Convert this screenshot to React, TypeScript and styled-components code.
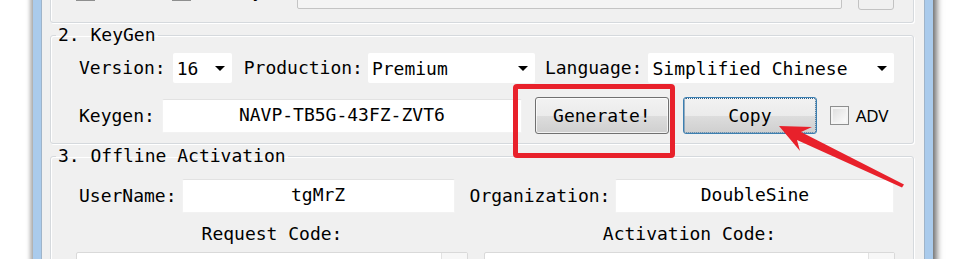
import styled, { createGlobalStyle } from 'styled-components';

const GlobalStyle = createGlobalStyle`
  html, body {
    margin: 0;
    padding: 0;
    background: #ffffff;
  }
  body {
    font-family: 'DejaVu Sans Mono', 'Liberation Mono', monospace;
    font-size: 18px;
    color: #000;
  }
`;

const App = () => {
  return (
    <Page>
      <GlobalStyle />
      <Frame>
        <Client>
          <Group>
            <Row $h={49} $pl={25} $pb={12} $align="flex-end">
              <CheckItem $w={96}>
                <CheckBox $mb={9} />
                <CheckText $mb={9}>Patch</CheckText>
              </CheckItem>
              <CheckItem $w={125}>
                <CheckBox $mb={9} />
                <CheckText $mb={9}>Verify</CheckText>
              </CheckItem>
              <TopField />
              <SmallButton />
            </Row>
          </Group>

          <Group $mt={2}>
            <Title>2. KeyGen</Title>
            <Row $pt={8} $pl={28}>
              <Label $mr={7}>Version:</Label>
              <Combo $w={59}>
                16
                <Arrow />
              </Combo>
              <Label $ml={12} $mr={5}>
                Production:
              </Label>
              <Combo $w={167}>
                Premium
                <Arrow />
              </Combo>
              <Label $ml={10} $mr={6}>
                Language:
              </Label>
              <Combo $w={246}>
                Simplified Chinese
                <Arrow />
              </Combo>
            </Row>
            <Row $pt={14} $pl={28} $pb={9}>
              <Label $mr={7}>Keygen:</Label>
              <TextBox $w={360}>NAVP-TB5G-43FZ-ZVT6</TextBox>
              <Marked>
                <Button>Generate!</Button>
                <RedBox />
              </Marked>
              <Button $focused>Copy</Button>
              <CheckBox $ml={13} />
              <AdvText>ADV</AdvText>
            </Row>
          </Group>

          <Group $mt={2}>
            <Title>3. Offline Activation</Title>
            <Row $pt={13} $pl={28}>
              <Label $mr={5}>UserName:</Label>
              <TextBox $w={273}>tgMrZ</TextBox>
              <Label $ml={15} $mr={5}>
                Organization:
              </Label>
              <TextBox $w={279}>DoubleSine</TextBox>
            </Row>
            <CodeGrid>
              <CodeLabel>Request Code:</CodeLabel>
              <CodeLabel>Activation Code:</CodeLabel>
              <CodeArea>
                <Scroll />
              </CodeArea>
              <CodeArea>
                <Scroll />
              </CodeArea>
            </CodeGrid>
          </Group>
        </Client>
      </Frame>

      <ArrowSvg width="958" height="259" viewBox="0 0 958 259">
        <polygon
          fill="#e8212b"
          points="779,126 812,127 801,132 904,184.5 902,187.5 797,140 800,151"
        />
      </ArrowSvg>
    </Page>
  );
};

export default App;

const Page = styled.div`
  position: relative;
  width: 958px;
  height: 259px;
  overflow: hidden;
  background: #ffffff;
`;

const Frame = styled.div`
  margin: -40px 0 0 33px;
  width: 900px;
  height: 340px;
  box-sizing: border-box;
  border-left: 8px solid #aacbec;
  border-right: 8px solid #aacbec;
  box-shadow: -3px 0 4px rgba(0, 0, 0, 0.3), 4px 0 6px rgba(0, 0, 0, 0.55);
`;

const Client = styled.div`
  height: 100%;
  box-sizing: border-box;
  background: #f0f0f0;
  border-left: 1px solid #9fb4c9;
  border-right: 1px solid #9fb4c9;
  padding: 0 10px 0 8px;
`;

const Group = styled.fieldset<{ $mt?: number }>`
  margin: ${(p) => p.$mt ?? 0}px 0 0 0;
  padding: 0;
  min-width: 0;
  border: 1px solid #d5d9dd;
  border-radius: 3px;
  box-shadow: 1px 1px 0 #ffffff, inset 1px 1px 0 #ffffff;
`;

const Title = styled.legend`
  margin-left: 5px;
  padding: 0 2px;
  line-height: 20px;
  font-size: 18px;
`;

const Row = styled.div<{
  $h?: number;
  $pt?: number;
  $pb?: number;
  $pl?: number;
  $align?: string;
}>`
  display: flex;
  align-items: ${(p) => p.$align ?? 'center'};
  box-sizing: border-box;
  ${(p) => (p.$h ? `height: ${p.$h + (p.$pb ?? 0)}px;` : '')}
  padding: ${(p) => p.$pt ?? 0}px 0 ${(p) => p.$pb ?? 0}px
    ${(p) => p.$pl ?? 0}px;
`;

const Label = styled.span<{ $ml?: number; $mr?: number }>`
  margin-left: ${(p) => p.$ml ?? 0}px;
  margin-right: ${(p) => p.$mr ?? 0}px;
  line-height: 20px;
  white-space: nowrap;
`;

const Combo = styled.div<{ $w: number }>`
  width: ${(p) => p.$w}px;
  height: 30px;
  box-sizing: border-box;
  display: flex;
  align-items: center;
  justify-content: space-between;
  padding-left: 4px;
  background: #ffffff;
  border-radius: 2px;
  white-space: nowrap;
`;

const Arrow = styled.span`
  width: 0;
  height: 0;
  margin-right: 7px;
  border-left: 5.5px solid transparent;
  border-right: 5.5px solid transparent;
  border-top: 5.5px solid #000;
`;

const TextBox = styled.div<{ $w: number }>`
  width: ${(p) => p.$w}px;
  height: 34px;
  box-sizing: border-box;
  display: flex;
  align-items: center;
  justify-content: center;
  padding-bottom: 3px;
  background: #ffffff;
  border: 1px solid #f2f2f2;
  border-top-color: #e2e2e2;
  border-radius: 2px;
  white-space: nowrap;
`;

const Marked = styled.div`
  position: relative;
  margin-left: 13px;
  margin-right: 14px;
  display: flex;
`;

const RedBox = styled.div`
  position: absolute;
  left: -22px;
  top: -13px;
  width: 162px;
  height: 74px;
  box-sizing: border-box;
  border: 5px solid #e8212b;
  border-radius: 4px;
`;

const Button = styled.div<{ $focused?: boolean }>`
  width: 134px;
  height: 37px;
  box-sizing: border-box;
  display: flex;
  align-items: center;
  justify-content: center;
  border: 1px solid ${(p) => (p.$focused ? '#3c7fb1' : '#707070')};
  border-radius: 3px;
  background: linear-gradient(
    to bottom,
    #f2f2f2 0%,
    #ebebeb 50%,
    #dddddd 51%,
    #cfcfcf 100%
  );
  box-shadow: inset 0 0 0 1px rgba(255, 255, 255, 0.7);
  outline: ${(p) => (p.$focused ? '1px dotted #2c5d84' : 'none')};
  outline-offset: -2px;
`;

const CheckBox = styled.div<{ $ml?: number; $mb?: number }>`
  flex: none;
  width: 19px;
  height: 19px;
  box-sizing: border-box;
  margin-left: ${(p) => p.$ml ?? 0}px;
  margin-bottom: ${(p) => p.$mb ?? 0}px;
  border: 1px solid #8e8f8f;
  background: linear-gradient(135deg, #dcdcdc 0%, #f4f4f4 70%, #ffffff 100%);
  box-shadow: inset 0 0 0 2px #f4f4f4;
`;

const AdvText = styled.span`
  margin-left: 7px;
  font-family: 'Noto Sans', 'Liberation Sans', sans-serif;
  font-size: 17px;
  letter-spacing: -0.4px;
  line-height: 20px;
`;

const CheckItem = styled.div<{ $w: number }>`
  width: ${(p) => p.$w}px;
  display: flex;
  align-items: flex-end;
`;

const CheckText = styled.span<{ $mb?: number }>`
  margin-left: 7px;
  margin-bottom: ${(p) => p.$mb ?? 0}px;
  line-height: 20px;
`;

const TopField = styled.div`
  width: 545px;
  height: 30px;
  margin-bottom: 1px;
  box-sizing: border-box;
  background: #f4f4f4;
  border: 1px solid #c4c4c4;
  border-radius: 2px;
`;

const SmallButton = styled.div`
  width: 36px;
  height: 30px;
  margin-left: 16px;
  box-sizing: border-box;
  border: 1px solid #c2c2c2;
  border-radius: 3px;
  background: #f0f0f0;
`;

const CodeGrid = styled.div`
  display: grid;
  grid-template-columns: 392px 411px;
  column-gap: 16px;
  margin: 11px 0 0 25px;
`;

const CodeLabel = styled.div`
  text-align: center;
  line-height: 20px;
  margin-bottom: 8px;
`;

const CodeArea = styled.div`
  height: 80px;
  display: flex;
  justify-content: flex-end;
  box-sizing: border-box;
  background: #ffffff;
  border: 1px solid #d9d9d9;
  border-radius: 2px;
`;

const Scroll = styled.div`
  width: 25px;
  background: #f7f7f7;
  border-left: 1px solid #e2e2e2;
`;

const ArrowSvg = styled.svg`
  position: absolute;
  left: 0;
  top: 0;
  pointer-events: none;
`;
